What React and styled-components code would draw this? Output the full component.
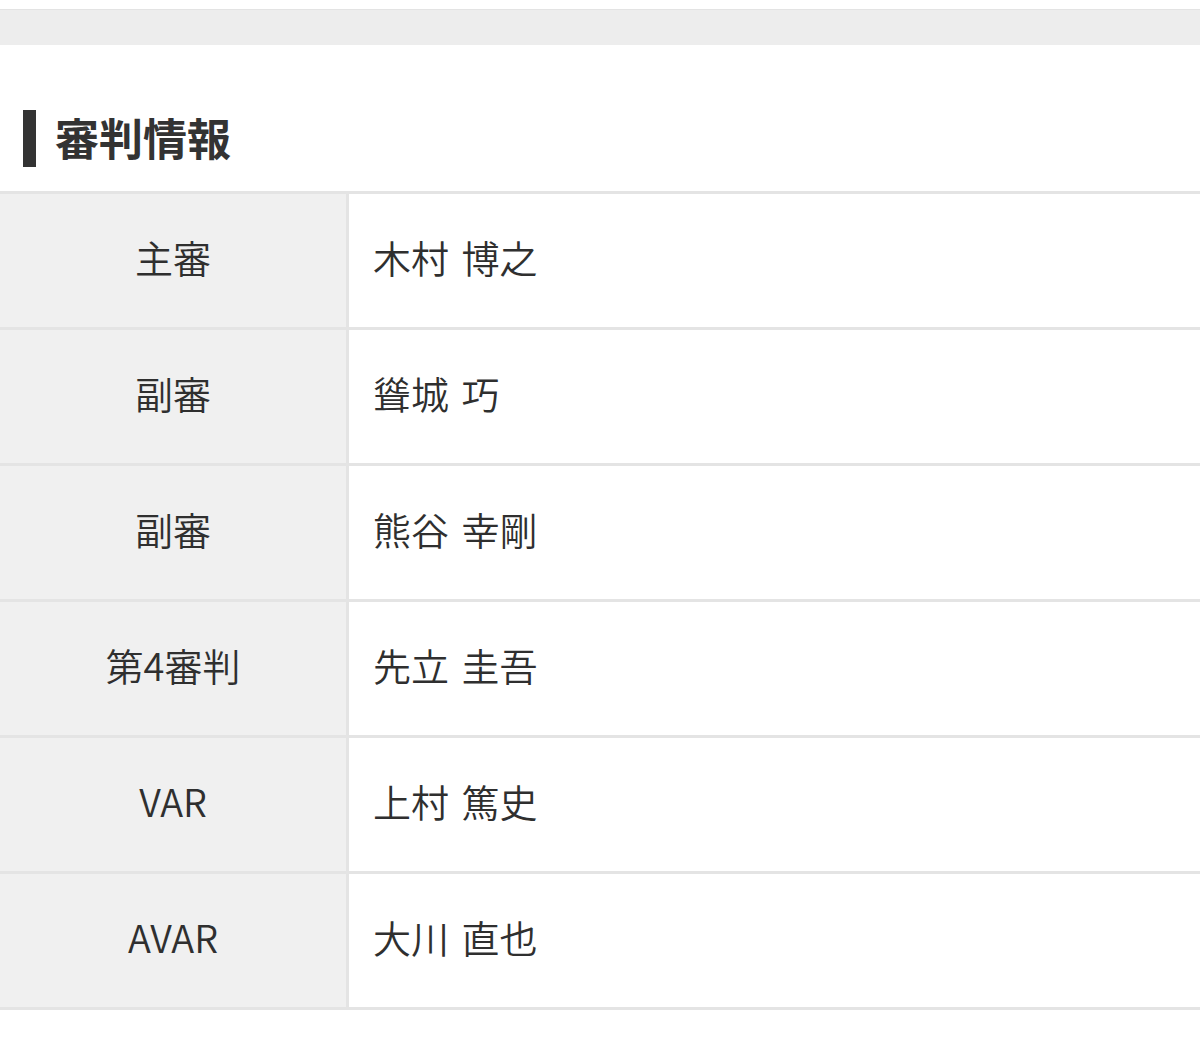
import React from "react"
import styled, { createGlobalStyle } from "styled-components"

const GlobalStyle = createGlobalStyle`
  body {
    margin: 0;
    background: #ffffff;
    font-family: "Noto Sans CJK JP", "Noto Sans", sans-serif;
    color: #333333;
  }
`

const Page = styled.div`
  width: 1200px;
  padding-top: 9px;
`

const TopBand = styled.div`
  height: 35px;
  background-color: #ededed;
  border-top: 1px solid #e3e3e3;
`

const Heading = styled.div`
  display: flex;
  align-items: center;
  margin-top: 65px;
  margin-left: 23px;
  height: 57px;
`

const HeadingBar = styled.div`
  width: 13px;
  height: 57px;
  background-color: #333333;
`

const HeadingTitle = styled.h2`
  margin: 0 0 4px 19px;
  font-size: 44px;
  font-weight: 700;
  line-height: 1;
  color: #333333;
`

const Table = styled.div`
  margin-top: 24px;
  border-top: 3px solid #e4e4e4;
`

const Row = styled.div`
  display: grid;
  grid-template-columns: 349px 1fr;
  height: 133px;
  border-bottom: 3px solid #e4e4e4;
`

const Label = styled.div`
  display: flex;
  align-items: center;
  justify-content: center;
  padding-bottom: 8px;
  background-color: #f0f0f0;
  border-right: 3px solid #e4e4e4;
  font-size: 38px;
  font-weight: 350;
  color: #2f2f2f;
`

const Value = styled.div`
  display: flex;
  align-items: center;
  padding: 0 0 8px 24px;
  font-size: 38px;
  font-weight: 350;
  color: #2f2f2f;
  word-spacing: 4px;
`

const referees = [
  { role: "主審", name: "木村 博之" },
  { role: "副審", name: "聳城 巧" },
  { role: "副審", name: "熊谷 幸剛" },
  { role: "第4審判", name: "先立 圭吾" },
  { role: "VAR", name: "上村 篤史" },
  { role: "AVAR", name: "大川 直也" },
]

const App = () => {
  return (
    <>
      <GlobalStyle />
      <Page>
        <TopBand />
        <Heading>
          <HeadingBar />
          <HeadingTitle>審判情報</HeadingTitle>
        </Heading>
        <Table>
          {referees.map((r, i) => (
            <Row key={i}>
              <Label>{r.role}</Label>
              <Value>{r.name}</Value>
            </Row>
          ))}
        </Table>
      </Page>
    </>
  )
}

export default App
